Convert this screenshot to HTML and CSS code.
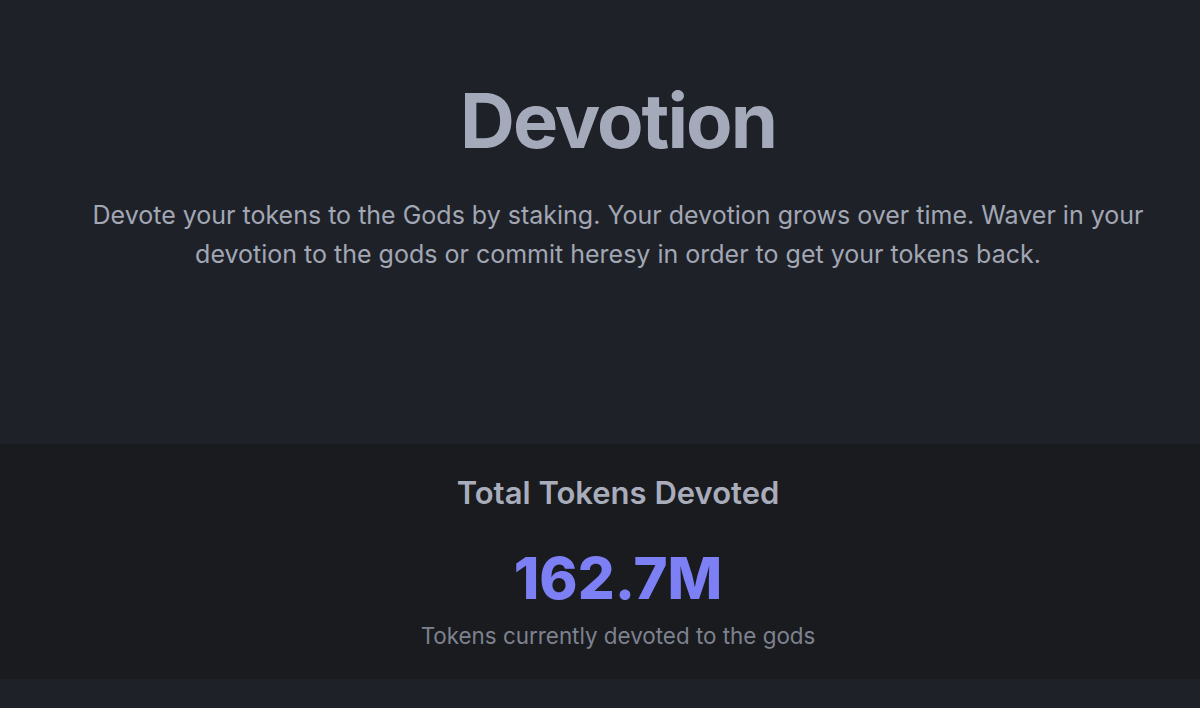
FILE: index.html
```html
<!DOCTYPE html>
<html lang="en">
<head>
<meta charset="utf-8">
<link rel="stylesheet" href="styles.css">
</head>
<body>
<main class="page">
  <section class="hero">
    <h1 class="title">Devotion</h1>
    <p class="lead">Devote your tokens to the Gods by staking. Your devotion grows over time. Waver in your devotion to the gods or commit heresy in order to get your tokens back.</p>
  </section>
  <section class="stats">
    <h2 class="stats-title">Total Tokens Devoted</h2>
    <div class="stats-value">162.7M</div>
    <p class="stats-caption">Tokens currently devoted to the gods</p>
  </section>
</main>
</body>
</html>
```

FILE: styles.css
```css
html, body {
  margin: 0;
  padding: 0;
  background: #1f2128;
  font-family: Inter, "Noto Sans", "Liberation Sans", sans-serif;
}
.page {
  display: flex;
  flex-direction: column;
}
.hero {
  display: flex;
  flex-direction: column;
  align-items: center;
  padding: 78px 0 0 36px;
  height: 444px;
  box-sizing: border-box;
  background: #1f2129;
}
.title {
  margin: 0;
  font-size: 76px;
  line-height: 84px;
  font-weight: 700;
  color: #a5aaba;
  letter-spacing: -2px;
}
.lead {
  margin: 34px 0 0;
  max-width: 1090px;
  text-align: center;
  font-size: 25px;
  line-height: 39px;
  color: #a2a7b4;
}
.stats {
  display: flex;
  flex-direction: column;
  align-items: center;
  height: 235px;
  box-sizing: border-box;
  padding: 29px 0 0 36px;
  background: #191b1f;
}
.stats-title {
  margin: 0;
  font-size: 31px;
  line-height: 40px;
  font-weight: 600;
  color: #a9adbb;
}
.stats-value {
  margin-top: 34px;
  font-size: 58px;
  line-height: 62px;
  font-weight: 800;
  color: #7c80f4;
}
.stats-caption {
  margin: 13px 0 0;
  font-size: 22.4px;
  line-height: 28px;
  color: #7e828f;
}
```
